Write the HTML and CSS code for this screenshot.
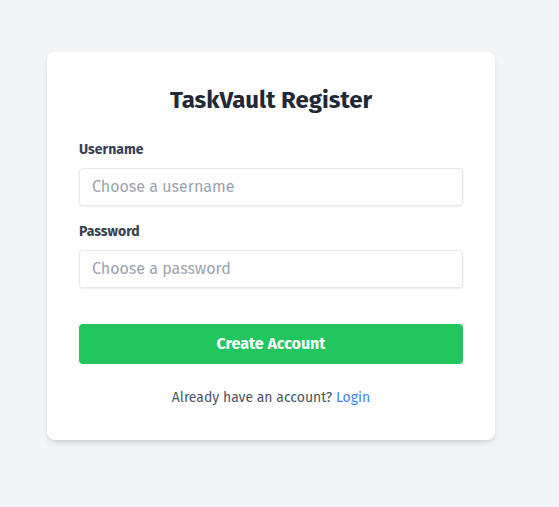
FILE: index.html
```html
<!doctype html>
<html>
  <head>
    <meta charset="utf-8" />
    <title>TaskVault Register</title>
    <link rel="stylesheet" href="styles.css">
  </head>

  <body>
    <div class="card">
      <h1>TaskVault Register</h1>

      <form>
        <div class="field">
          <label for="username">Username</label>
          <input type="text" id="username" placeholder="Choose a username" />
        </div>

        <div class="field">
          <label for="password">Password</label>
          <input type="password" id="password" placeholder="Choose a password" />
        </div>

        <button type="submit">Create Account</button>
      </form>

      <p class="switch">Already have an account? <a href="#">Login</a></p>
    </div>
  </body>
</html>
```

FILE: styles.css
```css
body {
  font-family: "Fira Sans", Lato, sans-serif;
  background-color: #f3f4f6;
  margin: 0;
  padding: 52px 64px 67px 47px;
  color: #1f2937;
}

.card {
  background-color: #fff;
  width: 448px;
  box-sizing: border-box;
  padding: 32px;
  border-radius: 8px;
  box-shadow: 0 4px 6px -1px rgba(0, 0, 0, 0.1), 0 2px 4px -2px rgba(0, 0, 0, 0.1);
}

h1 {
  margin: 0 0 24px;
  font-size: 24px;
  line-height: 32px;
  font-weight: 700;
  text-align: center;
  color: #1f2937;
}

.field {
  margin-bottom: 16px;
}

label {
  display: block;
  font-size: 14px;
  line-height: 20px;
  font-weight: 700;
  color: #374151;
  margin-bottom: 8px;
}

input {
  display: block;
  width: 100%;
  box-sizing: border-box;
  font-family: inherit;
  font-size: 16px;
  line-height: 20px;
  padding: 8px 12px;
  border: 1px solid #e5e7eb;
  border-radius: 4px;
  box-shadow: 0 1px 2px rgba(0, 0, 0, 0.08);
  color: #374151;
}

input::placeholder {
  color: #9ca3af;
}

button {
  display: block;
  width: 100%;
  margin-top: 36px;
  padding: 10px 16px;
  background-color: #22c55e;
  color: #fff;
  border: none;
  border-radius: 4px;
  font-family: inherit;
  font-size: 16px;
  line-height: 20px;
  font-weight: 700;
  cursor: pointer;
}

.switch {
  margin: 24px 0 0;
  text-align: center;
  font-size: 14px;
  line-height: 20px;
  color: #4b5563;
}

.switch a {
  color: #3b82f6;
  text-decoration: none;
}
```
